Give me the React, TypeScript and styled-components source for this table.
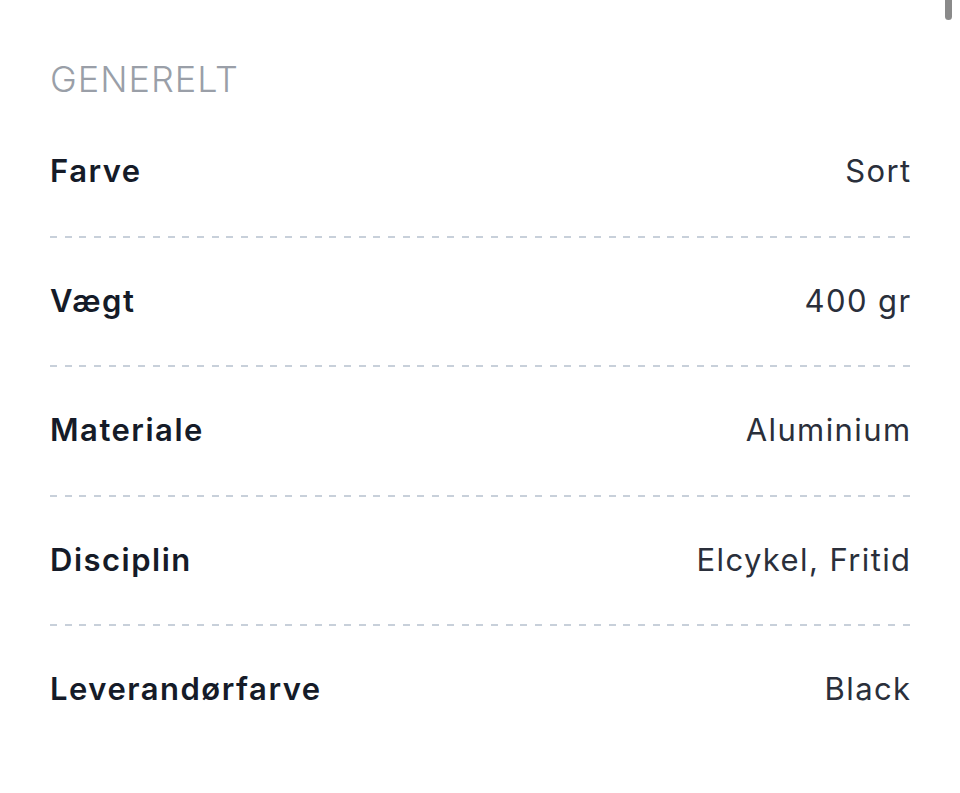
import { createGlobalStyle, styled } from 'styled-components';

const GlobalStyle = createGlobalStyle`
  html, body {
    margin: 0;
    padding: 0;
    background: #ffffff;
  }
  body {
    font-family: Inter, 'Noto Sans', 'Liberation Sans', sans-serif;
    -webkit-font-smoothing: antialiased;
  }
`;

const Page = styled.div`
  position: relative;
  min-height: 793px;
  padding: 57px 50px 0 50px;
  box-sizing: border-box;
  background: #ffffff;
`;

const Scrollbar = styled.div`
  position: absolute;
  top: -6px;
  right: 8px;
  width: 7px;
  height: 26px;
  border-radius: 4px;
  background: #8a8a8a;
`;

const SectionTitle = styled.h2`
  margin: 0 0 7px 0;
  font-size: 36px;
  line-height: 44px;
  font-weight: 300;
  color: #9a9fa8;
  letter-spacing: 1px;
`;

const SpecList = styled.dl`
  margin: 0;
  display: flex;
  flex-direction: column;
`;

const SpecRow = styled.div<{ $last?: boolean }>`
  display: flex;
  justify-content: space-between;
  align-items: center;
  padding: 45px 0 ${(p) => (p.$last ? '0' : '48.5px')} 0;
  background-image: ${(p) =>
    p.$last
      ? 'none'
      : 'repeating-linear-gradient(to right, #c8d0da 0 7px, transparent 7px 14.7px)'};
  background-size: 100% 2px;
  background-position: left bottom;
  background-repeat: no-repeat;
`;

const Label = styled.dt`
  margin: 0;
  font-size: 31px;
  line-height: 36px;
  font-weight: 600;
  letter-spacing: 1.5px;
  color: #151b28;
`;

const Value = styled.dd`
  margin: 0 -1.5px 0 0;
  font-size: 31px;
  line-height: 36px;
  font-weight: 400;
  letter-spacing: 1.4px;
  color: #2a2f3b;
`;

const specs = [
  { label: 'Farve', value: 'Sort' },
  { label: 'Vægt', value: '400 gr' },
  { label: 'Materiale', value: 'Aluminium' },
  { label: 'Disciplin', value: 'Elcykel, Fritid' },
  { label: 'Leverandørfarve', value: 'Black' },
];

const App = () => {
  return (
    <>
      <GlobalStyle />
      <Page>
        <Scrollbar />
        <SectionTitle>GENERELT</SectionTitle>
        <SpecList>
          {specs.map((spec, i) => (
            <SpecRow key={spec.label} $last={i === specs.length - 1}>
              <Label>{spec.label}</Label>
              <Value>{spec.value}</Value>
            </SpecRow>
          ))}
        </SpecList>
      </Page>
    </>
  );
};

export default App;
